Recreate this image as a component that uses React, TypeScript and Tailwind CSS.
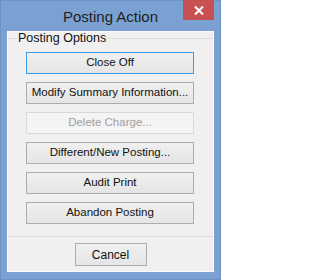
import React from 'react'

type ActionButtonProps = {
  label: string
  focused?: boolean
  disabled?: boolean
}

const ActionButton = ({ label, focused = false, disabled = false }: ActionButtonProps) => {
  const base = 'ml-[18px] w-[168px] h-[22px] flex items-center justify-center border text-[11.5px] leading-none whitespace-nowrap'
  if (disabled) {
    return (
      <button disabled className={`${base} border-[#d9d9d9] bg-[#f4f4f4] text-[#a0a0a0]`}>
        {label}
      </button>
    )
  }
  return (
    <button
      className={`${base} bg-gradient-to-b from-[#f0f0f0] to-[#e5e5e5] text-[#111] ${
        focused ? 'border-[#3c9be8]' : 'border-[#adadad]'
      }`}
    >
      {label}
    </button>
  )
}

const actions: ActionButtonProps[] = [
  { label: 'Close Off', focused: true },
  { label: 'Modify Summary Information...' },
  { label: 'Delete Charge...', disabled: true },
  { label: 'Different/New Posting...' },
  { label: 'Audit Print' },
  { label: 'Abandon Posting' }
]

export default function App() {
  return (
    <div
      className="w-[221px] h-[280px] bg-[#7ba1d3] border border-[#6d93c6] flex flex-col"
      style={{ fontFamily: '"Liberation Sans", Arial, sans-serif' }}
    >
      {/* Title bar */}
      <div className="relative h-[30px] flex items-center justify-center">
        <span className="text-[15px] text-[#1e1e1e] pt-[2px]">Posting Action</span>
        <button className="absolute top-[-1px] right-[6px] w-[31px] h-[20px] bg-[#c75050] flex items-center justify-center">
          <svg width="10" height="9" viewBox="0 0 10 9">
            <path d="M1 0.5 L9 8.5 M9 0.5 L1 8.5" stroke="#ffffff" strokeWidth="2" />
          </svg>
        </button>
      </div>

      {/* Client area */}
      <div className="mx-[6px] h-[241px] bg-[#f0f0f0] border border-[#fafafa] flex flex-col">
        <fieldset className="border-t border-b border-[#dcdcdc] h-[205px] flex flex-col">
          <legend className="ml-[9px] px-[1px] text-[12.5px] leading-[13px] text-[#111]">Posting Options</legend>
          <div className="flex flex-col gap-[8px] pt-[7px]">
            {actions.map((a, i) => (
              <ActionButton key={i} {...a} />
            ))}
          </div>
        </fieldset>
        <div className="flex justify-center pt-[6px]">
          <button className="w-[72px] h-[23px] border border-[#adadad] bg-gradient-to-b from-[#f0f0f0] to-[#e5e5e5] text-[12px] text-[#111]">
            Cancel
          </button>
        </div>
      </div>
    </div>
  )
}
